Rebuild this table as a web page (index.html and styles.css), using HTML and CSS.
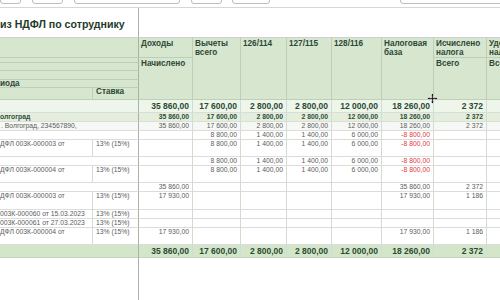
FILE: index.html
```html
<!DOCTYPE html>
<html lang="ru">
<head>
<meta charset="utf-8">
<title>Анализ НДФЛ по сотруднику</title>
<link rel="stylesheet" href="styles.css">
</head>
<body>
<div class="toolbar">
  <div class="tb-btn w21"></div>
  <div class="tb-btn w31"></div>
  <div class="tb-btn w106"></div>
  <div class="tb-btn w31"></div>
  <div class="tb-btn w38"></div>
  <div class="tb-btn tb-right"></div>
</div>
<div class="sheet">
  <!-- title -->
  <div class="c span2 title">из НДФЛ по сотруднику</div>
  <div class="c span8 title-rest"></div>

  <!-- header row 1 -->
  <div class="c span2 h hl"></div>
  <div class="c h">Доходы</div>
  <div class="c h rs6">Вычеты<br>всего</div>
  <div class="c h rs6">126/114</div>
  <div class="c h rs6">127/115</div>
  <div class="c h rs6">128/116</div>
  <div class="c h rs6">Налоговая<br>база</div>
  <div class="c h">Исчислено<br>налога</div>
  <div class="c h">Удержано<br>налога</div>
  <!-- header row 2 -->
  <div class="c span2 h hl"></div>
  <div class="c h rs5 sub">Начислено</div>
  <div class="c h rs5 sub">Всего</div>
  <div class="c h rs5 sub">Всего</div>
  <!-- header rows 3-5 -->
  <div class="c span2 h hl"></div>
  <div class="c span2 h hl"></div>
  <div class="c span2 h hl">иода</div>
  <!-- header row 6 -->
  <div class="c h hl"></div>
  <div class="c h hl hs">Ставка</div>

  <!-- r1 total -->
  <div class="c span2 r1"></div>
  <div class="c n r1 big">35 860,00</div>
  <div class="c n r1 big">17 600,00</div>
  <div class="c n r1 big">2 800,00</div>
  <div class="c n r1 big">2 800,00</div>
  <div class="c n r1 big">12 000,00</div>
  <div class="c n r1 big">18 260,00</div>
  <div class="c n r1 big">2 372</div>
  <div class="c n r1 big"></div>

  <!-- r2 -->
  <div class="c span2 r2 b">олгоград</div>
  <div class="c n r2 b">35 860,00</div>
  <div class="c n r2 b">17 600,00</div>
  <div class="c n r2 b">2 800,00</div>
  <div class="c n r2 b">2 800,00</div>
  <div class="c n r2 b">12 000,00</div>
  <div class="c n r2 b">18 260,00</div>
  <div class="c n r2 b">2 372</div>
  <div class="c n r2"></div>

  <!-- r3 -->
  <div class="c span2 r3">. Волгоград, 234567890,</div>
  <div class="c n r3">35 860,00</div>
  <div class="c n r3">17 600,00</div>
  <div class="c n r3">2 800,00</div>
  <div class="c n r3">2 800,00</div>
  <div class="c n r3">12 000,00</div>
  <div class="c n r3">18 260,00</div>
  <div class="c n r3">2 372</div>
  <div class="c n r3"></div>

  <!-- r4 -->
  <div class="c span2"></div>
  <div class="c n"></div>
  <div class="c n">8 800,00</div>
  <div class="c n">1 400,00</div>
  <div class="c n">1 400,00</div>
  <div class="c n">6 000,00</div>
  <div class="c n red">-8 800,00</div>
  <div class="c n"></div>
  <div class="c n"></div>

  <!-- r5 -->
  <div class="c">ДФЛ 003К-000003 от</div>
  <div class="c rate">13% (15%)</div>
  <div class="c n"></div>
  <div class="c n">8 800,00</div>
  <div class="c n">1 400,00</div>
  <div class="c n">1 400,00</div>
  <div class="c n">6 000,00</div>
  <div class="c n red">-8 800,00</div>
  <div class="c n"></div>
  <div class="c n"></div>

  <!-- r6 -->
  <div class="c span2"></div>
  <div class="c n"></div>
  <div class="c n">8 800,00</div>
  <div class="c n">1 400,00</div>
  <div class="c n">1 400,00</div>
  <div class="c n">6 000,00</div>
  <div class="c n red">-8 800,00</div>
  <div class="c n"></div>
  <div class="c n"></div>

  <!-- r7 -->
  <div class="c">ДФЛ 003К-000004 от</div>
  <div class="c rate">13% (15%)</div>
  <div class="c n"></div>
  <div class="c n">8 800,00</div>
  <div class="c n">1 400,00</div>
  <div class="c n">1 400,00</div>
  <div class="c n">6 000,00</div>
  <div class="c n red">-8 800,00</div>
  <div class="c n"></div>
  <div class="c n"></div>

  <!-- r8 -->
  <div class="c span2"></div>
  <div class="c n">35 860,00</div>
  <div class="c n"></div>
  <div class="c n"></div>
  <div class="c n"></div>
  <div class="c n"></div>
  <div class="c n">35 860,00</div>
  <div class="c n">2 372</div>
  <div class="c n"></div>

  <!-- r9 -->
  <div class="c">ДФЛ 003К-000003 от</div>
  <div class="c rate">13% (15%)</div>
  <div class="c n">17 930,00</div>
  <div class="c n"></div>
  <div class="c n"></div>
  <div class="c n"></div>
  <div class="c n"></div>
  <div class="c n">17 930,00</div>
  <div class="c n">1 186</div>
  <div class="c n"></div>

  <!-- r10 -->
  <div class="c">003К-000060 от 15.03.2023</div>
  <div class="c rate">13% (15%)</div>
  <div class="c n"></div>
  <div class="c n"></div>
  <div class="c n"></div>
  <div class="c n"></div>
  <div class="c n"></div>
  <div class="c n"></div>
  <div class="c n"></div>
  <div class="c n"></div>

  <!-- r11 -->
  <div class="c">003К-000061 от 27.03.2023</div>
  <div class="c rate">13% (15%)</div>
  <div class="c n"></div>
  <div class="c n"></div>
  <div class="c n"></div>
  <div class="c n"></div>
  <div class="c n"></div>
  <div class="c n"></div>
  <div class="c n"></div>
  <div class="c n"></div>

  <!-- r12 -->
  <div class="c">ДФЛ 003К-000004 от</div>
  <div class="c rate">13% (15%)</div>
  <div class="c n">17 930,00</div>
  <div class="c n"></div>
  <div class="c n"></div>
  <div class="c n"></div>
  <div class="c n"></div>
  <div class="c n">17 930,00</div>
  <div class="c n">1 186</div>
  <div class="c n"></div>

  <!-- footer -->
  <div class="c span2 ft"></div>
  <div class="c n ft big">35 860,00</div>
  <div class="c n ft big">17 600,00</div>
  <div class="c n ft big">2 800,00</div>
  <div class="c n ft big">2 800,00</div>
  <div class="c n ft big">12 000,00</div>
  <div class="c n ft big">18 260,00</div>
  <div class="c n ft big">2 372</div>
  <div class="c n ft big"></div>

  <!-- filler -->
  <div class="c span2 filler"></div>
  <div class="span8"></div>
</div>

<svg class="cursor" width="11" height="11" viewBox="0 0 11 11">
  <path d="M5.5 0.5 L7.5 2.5 L6.3 2.5 L6.3 4.7 L8.5 4.7 L8.5 3.5 L10.5 5.5 L8.5 7.5 L8.5 6.3 L6.3 6.3 L6.3 8.5 L7.5 8.5 L5.5 10.5 L3.5 8.5 L4.7 8.5 L4.7 6.3 L2.5 6.3 L2.5 7.5 L0.5 5.5 L2.5 3.5 L2.5 4.7 L4.7 4.7 L4.7 2.5 L3.5 2.5 Z" fill="#111" stroke="#fff" stroke-width="0.6"/>
</svg>
</body>
</html>
```

FILE: styles.css
```css
* { box-sizing: border-box; }

html, body {
  margin: 0;
  padding: 0;
  width: 500px;
  height: 300px;
  overflow: hidden;
  background: #fff;
}

body {
  position: relative;
  font-family: "Liberation Sans", Arial, sans-serif;
}

.toolbar {
  height: 8px;
  border-bottom: 1px solid #d6d6d6;
  display: flex;
  gap: 11px;
}

.tb-btn {
  flex: none;
  margin-top: -10px;
  height: 14px;
  border: 1px solid #bdbdbd;
  border-radius: 3px;
  background: #fff;
}

.w21 { width: 21px; }
.w31 { width: 31px; }
.w106 { width: 106px; }
.w38 { width: 38px; margin-left: -1px; }
.tb-right { width: 110px; margin-left: auto; margin-right: -10px; }

.sheet {
  display: grid;
  width: 527px;
  grid-template-columns: 93px 46px 54px 48px 46px 45px 50px 52px 53px 40px;
  grid-template-rows: 30px 20px 5px 8px 9px 8px 12px 13px 9px 9px 9px 17px 9px 17px 9px 18px 9px 9px 17px 13px 60px;
}

.span2 { grid-column: span 2; }
.span8 { grid-column: span 8; }
.rs5 { grid-row: span 5; }
.rs6 { grid-row: span 6; }

.c {
  border-bottom: 1px solid #dcdcdc;
  border-right: 1px solid #d2dccf;
  font-size: 6.8px;
  line-height: 8px;
  color: #5c5c5c;
  white-space: nowrap;
  overflow: hidden;
  padding: 0 3px 0 0;
}

/* the frozen-area divider after the second column */
.sheet > .c:nth-child(1),
.span2,
.rate {
  border-right-color: #a9b1a9;
}

.n { text-align: right; }

.title {
  font-size: 10.6px;
  line-height: 12px;
  font-weight: bold;
  color: #1f3a2b;
  padding-top: 10px;
  border-bottom-color: #cfcfcf;
  overflow: visible;
}

.title-rest {
  border-right: none;
  border-bottom-color: #cfcfcf;
}

.h {
  background: #d7e6cf;
  border-bottom-color: #bfcfb7;
  border-right-color: #bfcfb7;
  color: #2c4837;
  font-weight: bold;
  font-size: 8.2px;
  line-height: 8.5px;
  padding: 2px 2px 0 2px;
}

.h.sub { padding-top: 1.5px; }

.h.hl { padding: 0; line-height: 8px; }
.h.hl.span2 { border-right-color: #a9b5a4; }
.h.hs { padding-left: 3px; border-right-color: #a9b5a4; }

.big {
  font-size: 8.5px;
  line-height: 12px;
  font-weight: bold;
  color: #2a4a33;
}

.r1 { background: #eef5ea; }
.r2 { background: #e3eedd; }
.r3 { background: #f5f8f3; }

.b {
  font-weight: bold;
  color: #2e4e37;
}

.r3.span2 { padding-left: 1px; }

.rate { padding-left: 3px; }

.red { color: #e0393b; }

.ft {
  background: #d4e6ca;
  border-bottom-color: #c2d4b8;
}

.filler {
  border-bottom: none;
}

.cursor {
  position: absolute;
  left: 427px;
  top: 93px;
}
```
